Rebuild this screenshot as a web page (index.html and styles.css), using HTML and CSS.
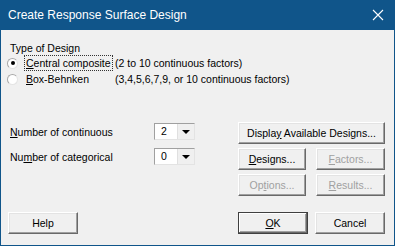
FILE: index.html
```html
<!DOCTYPE html>
<html>
<head>
    <title>Create Response Surface Design</title>
    <link rel="stylesheet" href="styles.css">
</head>
<body>
    <div class="window">
        <div class="titlebar">
            <span class="title">Create Response Surface Design</span>
            <svg class="close" width="12" height="12" viewBox="0 0 12 12">
                <path d="M1 1 L11 11 M11 1 L1 11" stroke="#fff" stroke-width="1.1" fill="none"/>
            </svg>
        </div>
        <div class="content">
            <div class="design-type">
                <div class="group-label">Type of Design</div>
                <div class="option">
                    <span class="radio checked"></span>
                    <span class="opt-name"><span class="focus"><u>C</u>entral composite</span></span>
                    <span class="opt-note">(2 to 10 continuous factors)</span>
                </div>
                <div class="option">
                    <span class="radio"></span>
                    <span class="opt-name"><u>B</u>ox-Behnken</span>
                    <span class="opt-note">(3,4,5,6,7,9, or 10 continuous factors)</span>
                </div>
            </div>

            <div class="middle">
                <div class="counts">
                    <div class="count-row">
                        <span class="count-label"><u>N</u>umber of continuous</span>
                        <div class="combo">
                            <span class="combo-value">2</span>
                            <span class="combo-btn"><span class="arrow"></span></span>
                        </div>
                    </div>
                    <div class="count-row">
                        <span class="count-label">Nu<u>m</u>ber of categorical</span>
                        <div class="combo">
                            <span class="combo-value">0</span>
                            <span class="combo-btn"><span class="arrow"></span></span>
                        </div>
                    </div>
                </div>
                <div class="actions">
                    <button class="btn">Displa<u>y</u> Available Designs...</button>
                    <div class="btn-row">
                        <button class="btn"><u>D</u>esigns...</button>
                        <button class="btn" disabled><u>F</u>actors...</button>
                    </div>
                    <div class="btn-row">
                        <button class="btn" disabled>Op<u>t</u>ions...</button>
                        <button class="btn" disabled><u>R</u>esults...</button>
                    </div>
                </div>
            </div>

            <div class="footer">
                <button class="btn small">Help</button>
                <div class="spacer"></div>
                <button class="btn small default"><u>O</u>K</button>
                <button class="btn small">Cancel</button>
            </div>
        </div>
    </div>
</body>
</html>
```

FILE: styles.css
```css
body {
    margin: 0;
    font-family: "Liberation Sans", Arial, sans-serif;
    font-size: 10.5px;
    color: #000;
    background: #f0f0f0;
}

.window {
    width: 395px;
    height: 246px;
    box-sizing: border-box;
    border: 1px solid #10558a;
    border-top: none;
    background: #f0f0f0;
    display: flex;
    flex-direction: column;
}

/* Title bar */
.titlebar {
    height: 30px;
    margin: 0 -1px;
    background: #10558a;
    display: flex;
    align-items: center;
    justify-content: space-between;
    padding: 0 11px 0 8px;
    flex-shrink: 0;
}

.title {
    color: #fff;
    font-size: 12px;
}

.close {
    display: block;
}

.content {
    flex: 1;
    display: flex;
    flex-direction: column;
}

u {
    text-decoration: underline;
    text-underline-offset: 1px;
}

/* Type of design */
.design-type {
    padding-top: 11px;
}

.group-label {
    line-height: 14px;
    padding-left: 9px;
}

.option {
    display: grid;
    grid-template-columns: 19px 89px auto;
    align-items: center;
    height: 16px;
    padding-left: 6px;
}

.radio {
    width: 9px;
    height: 9px;
    border-radius: 50%;
    border: 1px solid;
    border-color: #a8a8a8 #e4e4e4 #e4e4e4 #a8a8a8;
    background: #fff;
    position: relative;
}

.radio.checked:after {
    content: "";
    position: absolute;
    left: 2.5px;
    top: 2.5px;
    width: 4px;
    height: 4px;
    border-radius: 50%;
    background: #000;
}

.focus {
    outline: 1px dotted #333;
    outline-offset: 1px;
}

/* Middle part */
.middle {
    margin-top: 35px;
    display: flex;
    justify-content: space-between;
    padding: 0 9px 0 9px;
}

.counts {
    display: flex;
    flex-direction: column;
    gap: 8px;
    padding-top: 1px;
}

.count-row {
    display: flex;
    align-items: center;
    width: 185px;
    justify-content: space-between;
}

.combo {
    width: 41px;
    height: 17px;
    box-sizing: border-box;
    border: 1px solid;
    border-color: #a0a0a0 #e3e3e3 #e3e3e3 #a0a0a0;
    background: #fff;
    display: flex;
}

.combo-value {
    flex: 1;
    padding-left: 6px;
    line-height: 15px;
}

.combo-btn {
    width: 16px;
    background: #f0f0f0;
    border-left: 1px solid #e0e0e0;
    display: flex;
    align-items: center;
    justify-content: center;
}

.arrow {
    width: 0;
    height: 0;
    border-left: 4px solid transparent;
    border-right: 4px solid transparent;
    border-top: 4px solid #000;
}

.actions {
    width: 147px;
    display: flex;
    flex-direction: column;
    gap: 4px;
}

.btn-row {
    display: grid;
    grid-template-columns: 68px 69px;
    justify-content: space-between;
}

/* Buttons */
.btn {
    height: 22px;
    box-sizing: border-box;
    padding: 0;
    font-family: inherit;
    font-size: 10.5px;
    color: #000;
    background: #f0f0f0;
    border: 1px solid;
    border-color: #fff #696969 #696969 #fff;
    box-shadow: inset -1px -1px #a0a0a0, inset 1px 1px #e3e3e3;
}

.btn:disabled {
    color: #a0a0a0;
}

.footer {
    margin-top: 16px;
    display: flex;
    gap: 7px;
    padding: 0 9px 0 7px;
}

.spacer {
    flex: 1;
}

.btn.small {
    width: 70px;
}

.btn.default {
    border-color: #404040;
    box-shadow: inset -1px -1px #696969, inset 1px 1px #fff, inset -2px -2px #a0a0a0;
}
```
